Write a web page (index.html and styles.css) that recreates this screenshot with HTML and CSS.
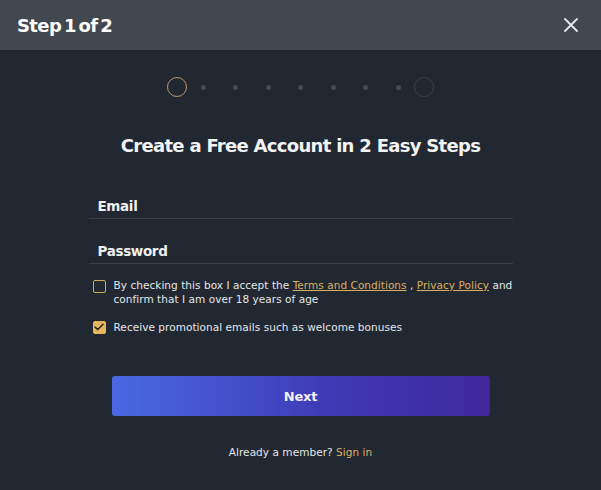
FILE: index.html
```html
<!DOCTYPE html>
<html>
<head>
<meta charset="utf-8">
<link rel="stylesheet" href="styles.css">
</head>
<body>
<div class="modal">
  <header class="head">
    <h1 class="head-title">Step 1 of 2</h1>
    <button class="close" aria-label="Close">
      <svg width="14" height="14" viewBox="0 0 14 14"><path d="M1 1L13 13M13 1L1 13" stroke="#e6e8ea" stroke-width="1.8" stroke-linecap="round"/></svg>
    </button>
  </header>
  <main class="body">
    <div class="stepper">
      <span class="ring ring-active"></span>
      <span class="dot"></span><span class="dot"></span><span class="dot"></span><span class="dot"></span><span class="dot"></span><span class="dot"></span><span class="dot"></span>
      <span class="ring ring-last"></span>
    </div>
    <h2 class="title">Create a Free Account in 2 Easy Steps</h2>
    <form class="form">
      <label class="field"><span class="field-label">Email</span></label>
      <label class="field"><span class="field-label">Password</span></label>
      <div class="check">
        <span class="box"></span>
        <p class="check-text">By checking this box I accept the <a class="link">Terms and Conditions</a> , <a class="link">Privacy Policy</a> and confirm that I am over 18 years of age</p>
      </div>
      <div class="check check-2">
        <span class="box box-on"><svg width="10" height="8" viewBox="0 0 10 8"><path d="M1 4L3.8 6.6L9 1.2" fill="none" stroke="#2a2420" stroke-width="1.5" stroke-linecap="round" stroke-linejoin="round"/></svg></span>
        <p class="check-text">Receive promotional emails such as welcome bonuses</p>
      </div>
      <button type="button" class="next">Next</button>
      <p class="signin">Already a member? <a class="signin-link">Sign in</a></p>
    </form>
  </main>
</div>
</body>
</html>
```
FILE: styles.css
```css
* { box-sizing: border-box; }
html, body { margin: 0; padding: 0; }
body {
  width: 601px;
  height: 490px;
  background: #222832;
  font-family: "DejaVu Sans", sans-serif;
  color: #eceef0;
  overflow: hidden;
}
.modal { display: flex; flex-direction: column; height: 490px; }
.head {
  height: 50px;
  background: #42484f;
  display: flex;
  align-items: center;
  justify-content: space-between;
  padding: 0 23px 0 17px;
}
.head-title {
  margin: 0;
  font-size: 18px;
  font-weight: bold;
  letter-spacing: -0.6px;
  word-spacing: -3px;
  color: #ffffff;
}
.close {
  background: none;
  border: 0;
  padding: 0;
  width: 14px;
  height: 14px;
  display: flex;
}
.body {
  flex: 1;
  display: flex;
  flex-direction: column;
  align-items: center;
  padding-top: 27px;
}
.stepper {
  display: flex;
  align-items: center;
  gap: 27.5px;
  height: 20px;
}
.ring {
  width: 20px;
  height: 20px;
  border-radius: 50%;
  border: 1.3px solid #3c424b;
}
.ring-active { border-color: #b89a62; margin-right: -14px; }
.ring-last { margin-left: -14px; }
.dot {
  width: 5px;
  height: 5px;
  border-radius: 50%;
  background: #454b55;
}
.title {
  margin: 38px 0 0;
  font-size: 18px;
  font-weight: bold;
  letter-spacing: -0.7px;
  color: #f2f3f5;
}
.form {
  width: 424px;
  margin-top: 40px;
  display: flex;
  flex-direction: column;
}
.field {
  display: block;
  border-bottom: 1.5px solid #3a4049;
  padding: 0 0 4px 9px;
  height: 23px;
}
.field + .field { margin-top: 22px; }
.field-label {
  font-size: 13.5px;
  font-weight: bold;
  letter-spacing: -0.35px;
  color: #eef0f2;
}
.check {
  display: flex;
  align-items: flex-start;
  margin-top: 14px;
  padding-left: 4px;
}
.check-2 { margin-top: 14px; align-items: center; }
.box {
  flex: none;
  width: 13px;
  height: 13px;
  border: 1.5px solid #cfa95c;
  border-radius: 2px;
  margin: 2px 8px 0 0;
  display: flex;
  align-items: center;
  justify-content: center;
}
.check-2 .box { margin-top: 0; }
.box-on { background: #e6b75c; border-color: #e6b75c; }
.check-text {
  margin: 0;
  font-size: 10.5px;
  line-height: 14px;
  letter-spacing: 0.05px;
  color: #e4e6e8;
}
.link {
  color: #d8b062;
  text-decoration: underline;
}
.next {
  align-self: center;
  margin-top: 42px;
  width: 378px;
  height: 40px;
  border: 0;
  border-radius: 3px;
  background: linear-gradient(90deg, #4a69e2 0%, #3f3bb8 55%, #40289c 100%);
  color: #f0f0f8;
  font-family: "DejaVu Sans", sans-serif;
  font-size: 13px;
  font-weight: bold;
  letter-spacing: -0.2px;
}
.signin {
  margin: 30px 0 0;
  text-align: center;
  font-size: 10.5px;
  letter-spacing: 0.05px;
  color: #e4e6e8;
}
.signin-link { color: #d8b062; }
```
